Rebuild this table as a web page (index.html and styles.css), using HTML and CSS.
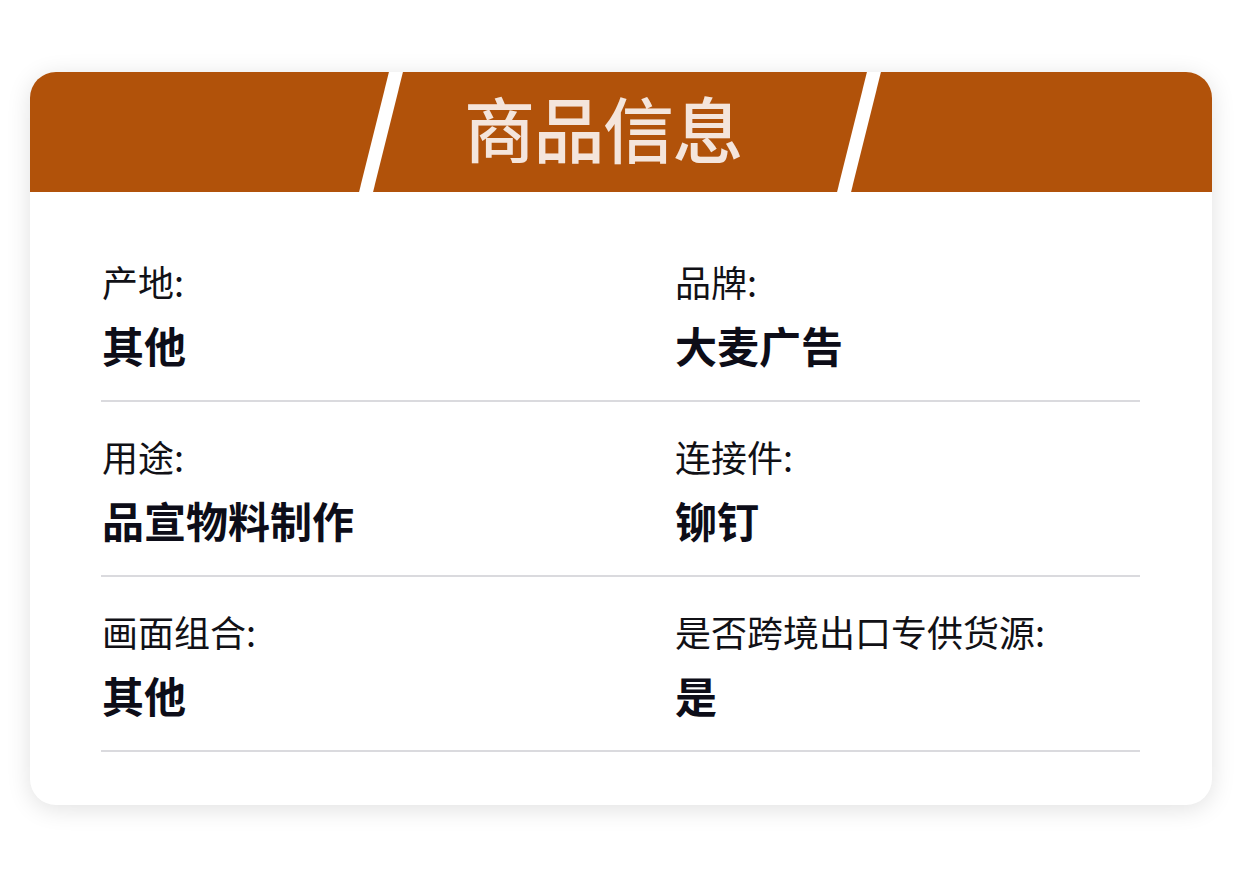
FILE: index.html
```html
<!DOCTYPE html>
<html lang="zh">
<head>
<meta charset="utf-8">
<link rel="stylesheet" href="styles.css">
</head>
<body>
<div class="card">
  <div class="header"><h1 class="title">商品信息</h1></div>
  <div class="body">
    <div class="row">
      <div class="cell"><div class="label">产地:</div><div class="value">其他</div></div>
      <div class="cell"><div class="label">品牌:</div><div class="value">大麦广告</div></div>
    </div>
    <div class="row">
      <div class="cell"><div class="label">用途:</div><div class="value">品宣物料制作</div></div>
      <div class="cell"><div class="label">连接件:</div><div class="value">铆钉</div></div>
    </div>
    <div class="row">
      <div class="cell"><div class="label">画面组合:</div><div class="value">其他</div></div>
      <div class="cell"><div class="label">是否跨境出口专供货源:</div><div class="value">是</div></div>
    </div>
  </div>
</div>
</body>
</html>
```
FILE: styles.css
```css
html, body {
  margin: 0;
  padding: 0;
  background: #ffffff;
}
body {
  font-family: "Noto Sans CJK SC", "Noto Sans", sans-serif;
  padding: 72px 30px 72px 30px;
}
.card {
  width: 1182px;
  height: 733px;
  box-sizing: border-box;
  background: #ffffff;
  border-radius: 26px;
  box-shadow: 0 4px 24px rgba(0, 0, 0, 0.12);
  overflow: hidden;
}
.header {
  position: relative;
  height: 120px;
  background: #b1520a;
  display: flex;
  justify-content: center;
  align-items: center;
  overflow: hidden;
}
.header::before,
.header::after {
  content: "";
  position: absolute;
  top: 0;
  bottom: 0;
  width: 14px;
  background: #ffffff;
  transform: skewX(-14deg);
}
.header::before { left: 344px; }
.header::after { left: 822px; }
.title {
  margin: 0 36px 12px 0;
  font-size: 71px;
  font-weight: 500;
  line-height: 1;
  color: #f4e5dc;
  letter-spacing: -1.5px;
}
.body {
  padding: 35px 72px 0 71px;
}
.row {
  display: grid;
  grid-template-columns: 573px 1fr;
  padding: 34px 0 30px 1px;
  border-bottom: 2px solid #dadade;
}
.label {
  font-size: 36px;
  line-height: 40px;
  color: #111116;
}
.value {
  margin-top: 19px;
  font-size: 42px;
  line-height: 50px;
  font-weight: 700;
  color: #0d0d18;
}
```
